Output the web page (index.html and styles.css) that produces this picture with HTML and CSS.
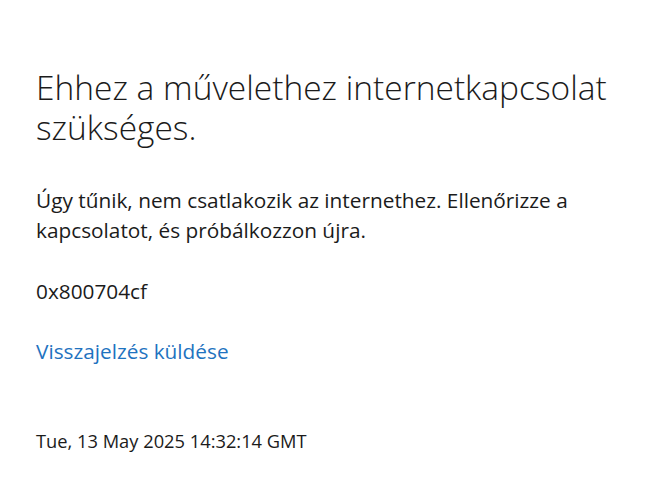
FILE: index.html
```html
<!DOCTYPE html>
<html lang="hu">
  <head>
    <meta charset="UTF-8" />
    <meta name="viewport" content="width=device-width, initial-scale=1.0" />
    <title>Nincs internetkapcsolat</title>
    <link rel="stylesheet" href="styles.css">
  </head>
  <body>
    <div id="container">
      <h1 class="title">Ehhez a művelethez internetkapcsolat szükséges.</h1>
      <p class="message">Úgy tűnik, nem csatlakozik az internethez. Ellenőrizze a kapcsolatot, és próbálkozzon újra.</p>
      <p class="code">0x800704cf</p>
      <a class="feedback" href="#">Visszajelzés küldése</a>
      <p class="date">Tue, 13 May 2025 14:32:14 GMT</p>
    </div>
  </body>
</html>
```

FILE: styles.css
```css
body {
  margin: 0;
  background: #fff;
  color: #1b1b1b;
  font-family: "Open Sans", "Noto Sans", sans-serif;
}
#container {
  padding: 67px 36px 0 36px;
  width: 590px;
}
.title {
  font-size: 33.5px;
  font-weight: 300;
  line-height: 40px;
  margin: 0 0 38px 0;
}
.message {
  font-size: 20.8px;
  line-height: 30px;
  margin: 0 0 31px 0;
}
.code {
  font-size: 20.8px;
  line-height: 30px;
  margin: 0 0 30px 0;
}
.feedback {
  display: block;
  font-size: 20.8px;
  line-height: 30px;
  color: #1f73c0;
  text-decoration: none;
}
.date {
  font-size: 18.3px;
  line-height: 24px;
  margin: 63px 0 0 0;
}
```
